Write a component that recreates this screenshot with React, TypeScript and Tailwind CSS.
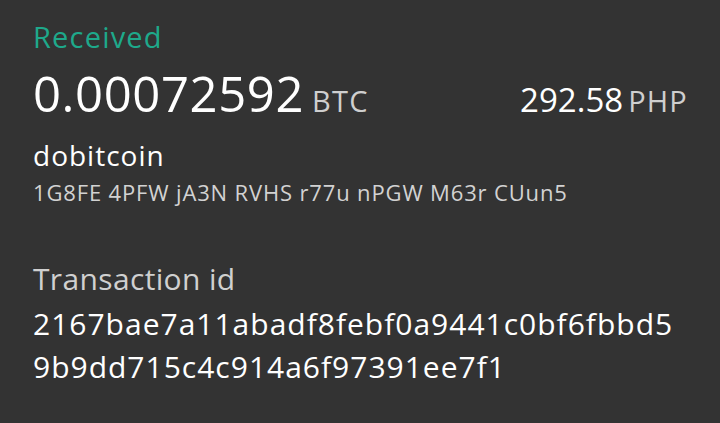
export default function App() {
  return (
    <div
      className="w-[720px] h-[423px] bg-[#333333] text-white pl-[33px] pr-[32px] pt-[21px] overflow-hidden"
      style={{ fontFamily: "'Open Sans', Roboto, sans-serif" }}
    >
      <div className="text-[#1ea98b] text-[29px] leading-[32px] tracking-[1.2px]">Received</div>

      {/* Amounts */}
      <div className="flex items-baseline justify-between mt-[12px] leading-[56px]">
        <div className="flex items-baseline">
          <span className="text-[49px] tracking-[0.6px]">0.00072592</span>
          <span className="text-[29px] tracking-[1.2px] text-[#cfcfcf] ml-[8px]">BTC</span>
        </div>
        <div className="flex items-baseline">
          <span className="text-[33px]">292.58</span>
          <span className="text-[29px] tracking-[1.2px] text-[#cfcfcf] ml-[5px]">PHP</span>
        </div>
      </div>

      <div className="text-[28px] tracking-[1px] leading-[34px] mt-[9px]">dobitcoin</div>
      <div className="text-[22px] tracking-[0.85px] leading-[30px] mt-[5px] text-[#d2d2d2]">
        1G8FE 4PFW jA3N RVHS r77u nPGW M63r CUun5
      </div>

      <div className="mt-[52px] text-[30px] tracking-[0.35px] leading-[40px] text-[#d0d0d0]">
        Transaction id
      </div>
      <div className="text-[30px] tracking-[1px] leading-[43px] mt-[3px]">
        <div>2167bae7a11abadf8febf0a9441c0bf6fbbd5</div>
        <div>9b9dd715c4c914a6f97391ee7f1</div>
      </div>
    </div>
  );
}
